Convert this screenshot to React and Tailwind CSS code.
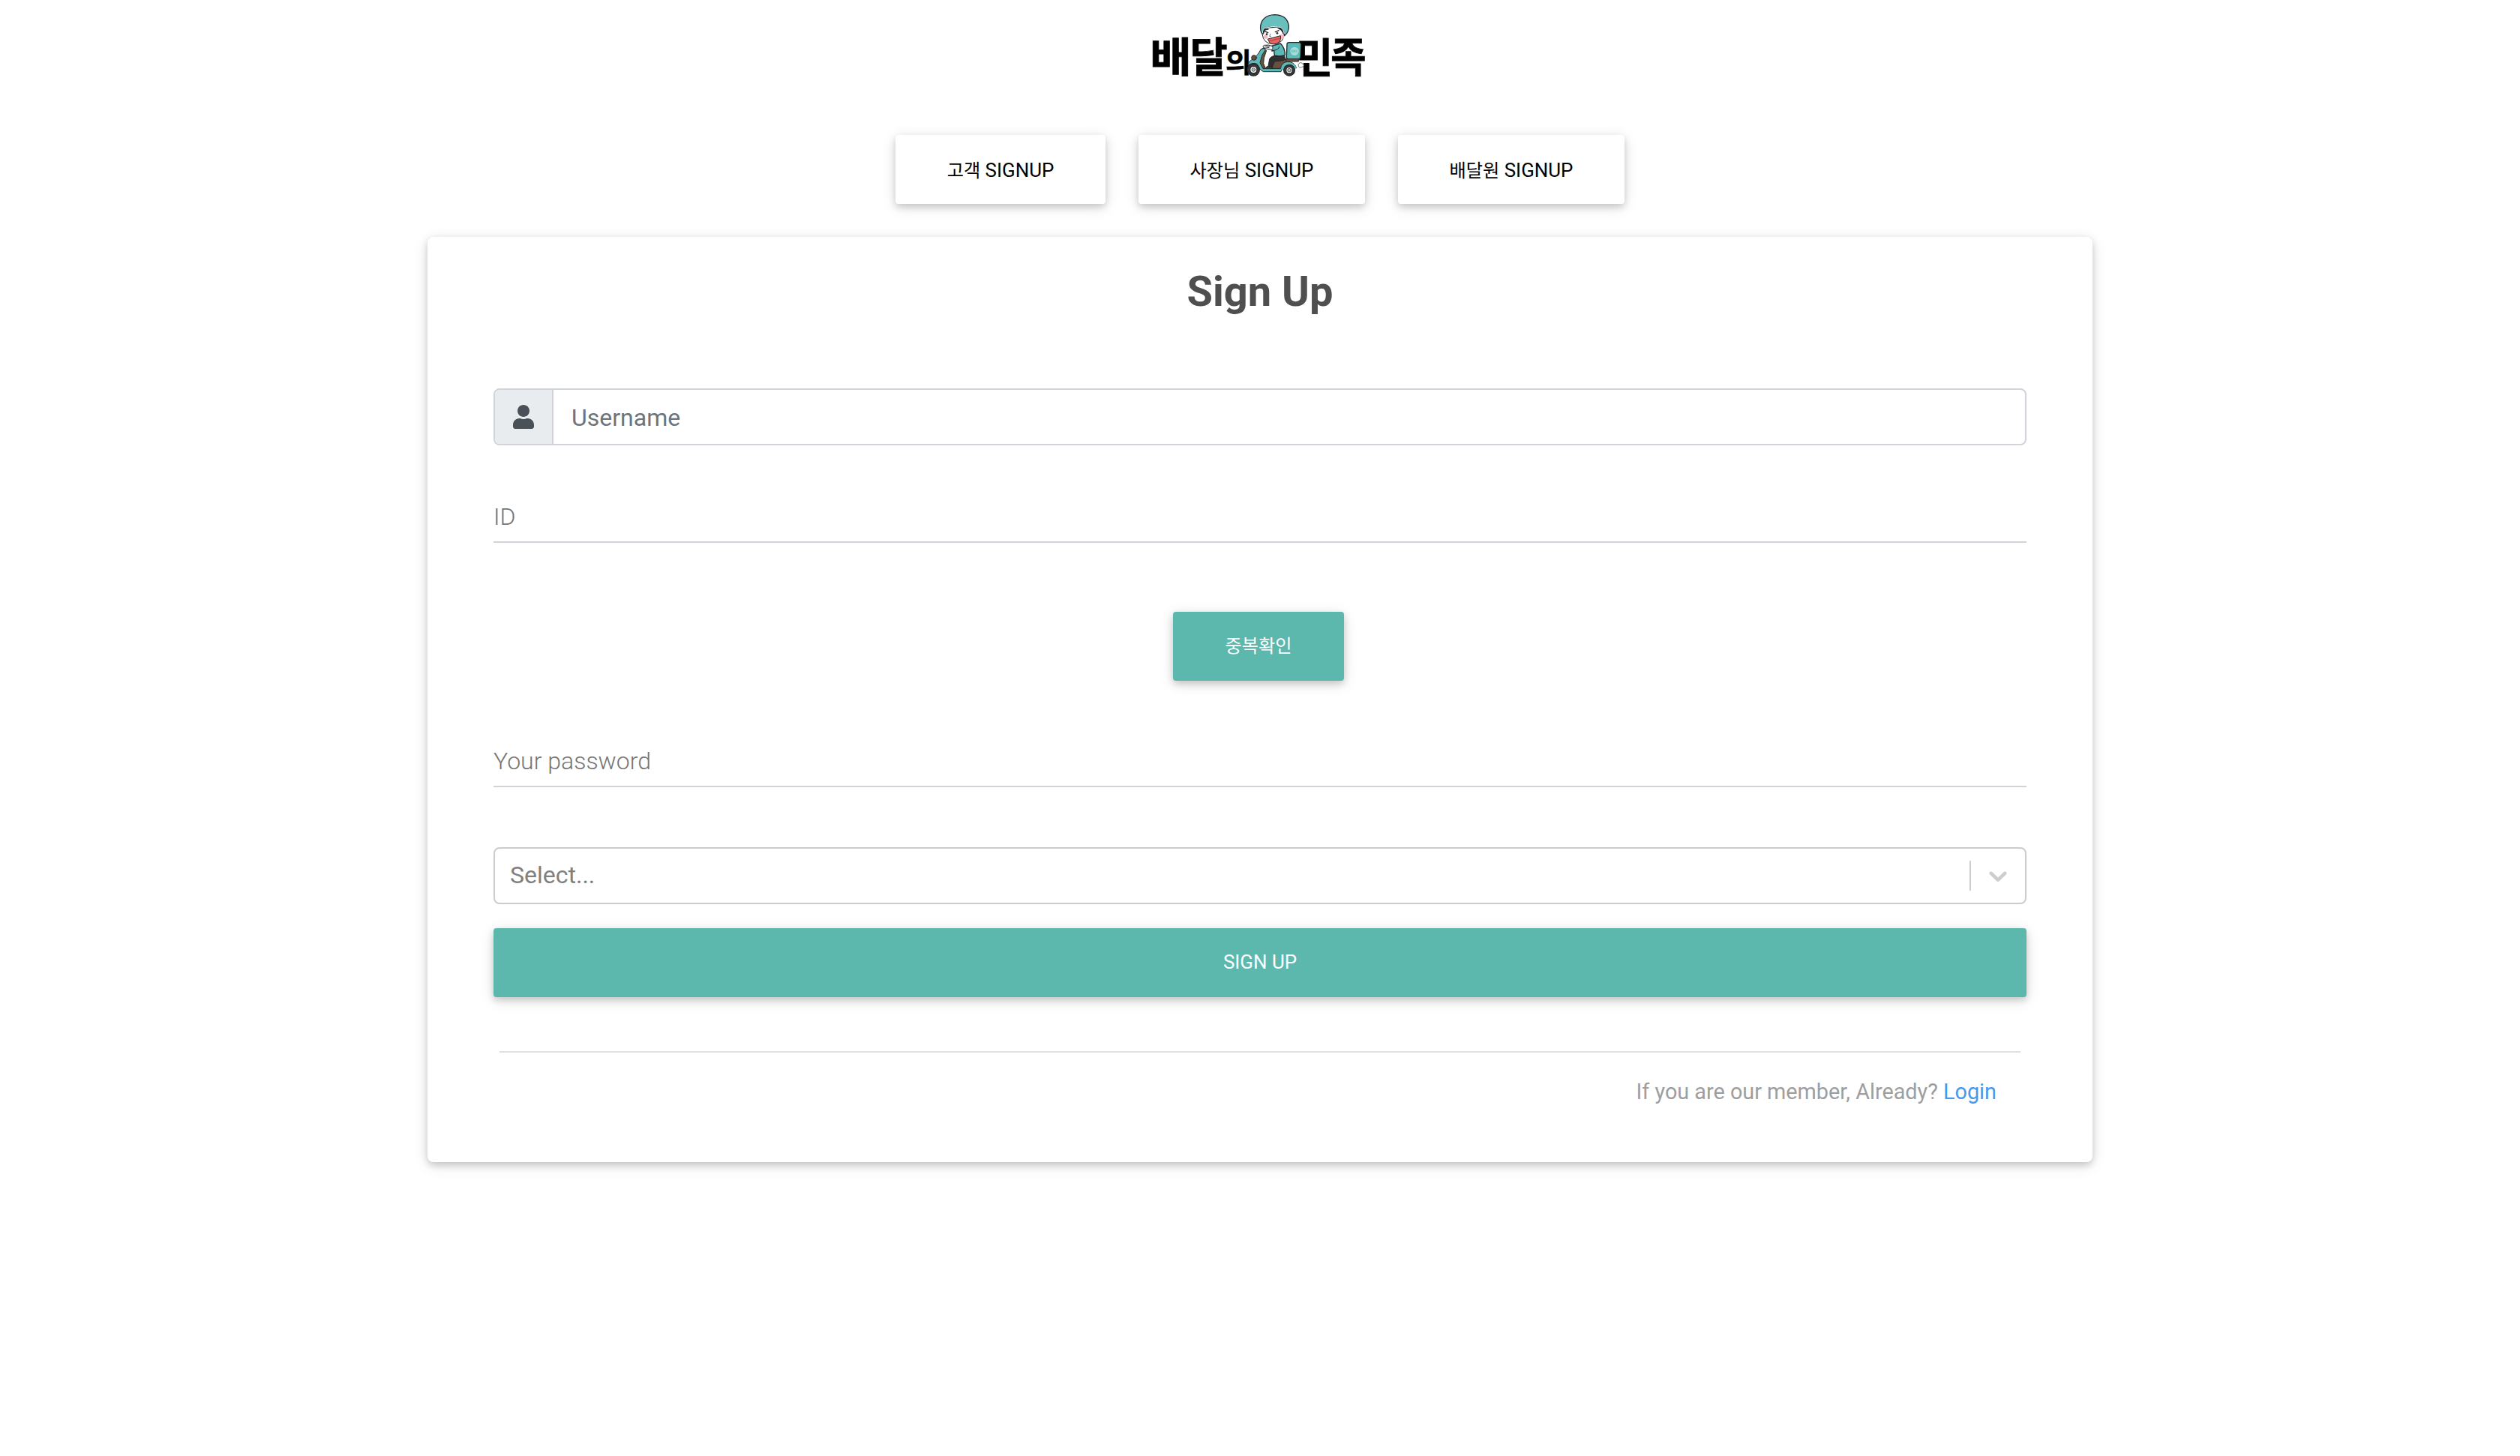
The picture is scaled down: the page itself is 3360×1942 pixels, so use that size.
import React from "react";
import { FaUser } from "react-icons/fa";

const raised =
  "shadow-[0_4px_10px_0_rgba(0,0,0,0.16),0_4px_20px_0_rgba(0,0,0,0.12)]";

function Ko({ children }) {
  return <span className="text-[24.2px]">{children}</span>;
}

function Logo() {
  return (
    <svg width="320" height="120" viewBox="0 0 960 360" aria-label="배달의민족">
      <g className="fill-black stroke-black stroke-[1.5px] font-['Noto_Sans_CJK_KR',sans-serif] text-[100px] font-bold">
        <text transform="translate(40 289) scale(1.81 1.64)">배</text>
        <text transform="translate(200 289) scale(1.63 1.64)">달</text>
        <text transform="translate(342 292) scale(1.13 1.08)">의</text>
        <text transform="translate(624 290) scale(1.6 1.64)">민</text>
        <text transform="translate(763 289) scale(1.54 1.64)">족</text>
      </g>
      <g stroke="#26282a" strokeWidth="4" strokeLinejoin="round" strokeLinecap="round">
        {/* exhaust */}
        <path d="M634 256c6-8 14-6 16 0 8 2 6 12-2 12-6 5-14 2-14-4z" fill="#fff" strokeWidth="2" />
        {/* delivery box */}
        <path d="M596 170h40q8 0 8 8l-2 50q0 8-8 8h-40q-8 0-8-8l2-50q0-8 8-8z" fill="#5bb9b8" />
        <circle cx="618" cy="205" r="17" fill="#a5dcda" stroke="none" />
        <path d="M607 201h6v7h-6zM616 200v9M621 201h6v7h-6z" fill="none" stroke="#5bb9b8" strokeWidth="2" />
        <path d="M582 236h52v10h-52z" fill="#68503f" strokeWidth="3" />
        {/* scooter body */}
        <path d="M531 246q28-10 54-8l-2 16-20 20h-34z" fill="#68503f" strokeWidth="3" />
        <path d="M482 204l14-8 10 6-10 30-2 22 8 20h-16l-10-24z" fill="#68503f" strokeWidth="3" />
        <path d="M484 197L494 193 502 199 488 221 480 251 492 275H562Q566 249 590 247 616 247 626 271L604 263 588 263Q568 265 564 287H494Q476 278 468 256 450 248 432 262 432 246 452 236 468 226 484 197z" fill="#5bb9b8" strokeWidth="3" />
        <circle cx="456" cy="231" r="10" fill="#68503f" strokeWidth="3" />
        {/* wheels */}
        <circle cx="454" cy="279" r="24" fill="#38383a" />
        <circle cx="454" cy="279" r="14" fill="#fff" />
        <circle cx="454" cy="279" r="7" fill="#b9baba" strokeWidth="2" />
        <circle cx="597" cy="281" r="22" fill="#38383a" />
        <circle cx="597" cy="281" r="13" fill="#fff" />
        <circle cx="597" cy="281" r="7" fill="#b9baba" strokeWidth="2" />
        <path d="M569 278q4-23 28-24 20 0 26 18" fill="none" stroke="#5bb9b8" strokeWidth="7" />
        {/* rider */}
        <path d="M578 224q6 14-4 18l-36 4-8 22-18 2 6-34q6-12 26-14z" fill="#2e2f32" strokeWidth="3" />
        <path d="M503 272q2-8 12-6l14 1v6z" fill="#4b382d" strokeWidth="3" />
        <path d="M526 184l36-10q18 18 18 46-20 8-42 2l-2-20-8 2z" fill="#5bb9b8" />
        <path d="M557 187q-2 12-22 15" fill="none" strokeWidth="3" />
        <path d="M530 185q-16-8-34-4-8 6 0 12l30 6q8-4 4-14z" fill="#fff" strokeWidth="3" />
        <path d="M500 188l16 3M504 182l14 4M490 195l8-4" fill="none" strokeWidth="3" />
        {/* head */}
        <path d="M490 124q-4 36 22 48 32 10 54-8 14-18 12-48l-30-8-40 4z" fill="#fff" strokeWidth="3" />
        <circle cx="503" cy="147" r="8" fill="#f5b9c3" stroke="none" />
        <circle cx="567" cy="147" r="9" fill="#f5b9c3" stroke="none" />
        <path d="M512 156l50-13q4 23-14 31-20 6-28-2z" fill="#e9635f" strokeWidth="3" />
        <path d="M517 164l42-10" stroke="#8e2b2b" strokeWidth="2" />
        <path d="M498 124l14 7M541 128l14-6" strokeWidth="4" />
        <circle cx="507" cy="137" r="4" fill="#26282a" stroke="none" />
        <circle cx="549" cy="133" r="4" fill="#26282a" stroke="none" />
        <path d="M522 136l-4 9 5 1" fill="none" strokeWidth="2" />
        <path d="M490 122q10-8 24-5l-16 4-4 14zM552 112q18-2 22 24l-8-14z" fill="#111" strokeWidth="3" />
        <path d="M490 137q-10-12-8-34 8-42 56-44 50 0 57 44 2 24-17 40-1-24-16-32-36-8-62 2-10 8-10 24z" fill="#67bfbe" />
        <path d="M490 132q0-16 10-20 30-10 62-3 12 6 15 25" fill="none" stroke="#e9f6f5" strokeWidth="3" />
      </g>
    </svg>
  );
}

function TabButton({ label, width }) {
  return (
    <button
      className={`flex h-[92px] ${width} items-center justify-center rounded-[4px] bg-white pt-[2px] text-[25.92px] text-black ${raised}`}
    >
      <span className="whitespace-pre leading-[38px]">
        <Ko>{label}</Ko> SIGNUP
      </span>
    </button>
  );
}

export default function App() {
  return (
    <div className="flex h-[1942px] w-[3360px] flex-col items-center bg-white font-[Roboto,'Noto_Sans_CJK_KR',sans-serif] antialiased">
      <Logo />
      <div className="mt-[60px] flex gap-[44px]">
        <TabButton label="고객" width="w-[280px]" />
        <TabButton label="사장님" width="w-[302px]" />
        <TabButton label="배달원" width="w-[302px]" />
      </div>

      <main className={`mt-[44px] flex h-[1234px] w-[2220px] flex-col rounded-[8px] bg-white px-[88px] ${raised}`}>
        <h3 className="mt-[39px] text-center text-[56px] leading-[68px] font-bold text-[#4f4f4f]">
          Sign Up
        </h3>

        <div className="mt-[95px] flex h-[76px] overflow-hidden rounded-[8px] border-2 border-[#ced4da]">
          <div className="flex w-[78px] items-center justify-center border-r-2 border-[#ced4da] bg-[#e9ecef]">
            <FaUser className="h-[32px] w-[28px] text-[#495057]" />
          </div>
          <div className="flex items-center pt-[2px] pl-[24px] text-[32px] leading-[48px] text-[#6c757d]">
            Username
          </div>
        </div>

        <div className="mt-[66px] h-[64px] border-b-2 border-[#ced4da] pt-[5px] text-[32px] leading-[48px] font-light text-[#757575]">
          ID
        </div>

        <button
          className={`mt-[92px] ml-[906px] flex h-[92px] w-[228px] items-center justify-center rounded-[4px] bg-[#5cb8ad] leading-[38px] text-white ${raised}`}
        >
          <Ko>중복확인</Ko>
        </button>

        <div className="mt-[78px] h-[64px] border-b-2 border-[#ced4da] pt-[5px] text-[32px] leading-[48px] font-light text-[#757575]">
          Your password
        </div>

        <div className="mt-[80px] flex h-[76px] items-center rounded-[8px] border-2 border-[#cccccc]">
          <span className="flex-1 pb-[2px] pl-[20px] text-[32px] leading-[48px] text-[#808080]">Select...</span>
          <span className="h-[40px] w-[2px] bg-[#cccccc]" />
          <svg className="mx-[16px] h-[40px] w-[40px] fill-[#cccccc]" viewBox="0 0 20 20">
            <path d="M4.516 7.548c0.436-0.446 1.043-0.481 1.576 0l3.908 3.747 3.908-3.747c0.533-0.481 1.141-0.446 1.574 0 0.436 0.445 0.408 1.197 0 1.615-0.406 0.418-4.695 4.502-4.695 4.502-0.217 0.223-0.502 0.335-0.787 0.335s-0.57-0.112-0.789-0.335c0 0-4.287-4.084-4.695-4.502s-0.436-1.17 0-1.615z" />
          </svg>
        </div>

        <button
          className={`mt-[32px] flex h-[92px] items-center justify-center rounded-[4px] bg-[#5cb8ad] pb-[2px] text-[25.92px] leading-[38px] text-white ${raised}`}
        >
          SIGN UP
        </button>

        <div className="mx-[8px] mt-[72px] border-t-2 border-[#dee2e6] pt-[30px] pr-[32px] text-right text-[28.8px] leading-[44px] text-[#9e9e9e]">
          If you are our member, Already? <a className="text-[#4499f0]">Login</a>
        </div>
      </main>
    </div>
  );
}
